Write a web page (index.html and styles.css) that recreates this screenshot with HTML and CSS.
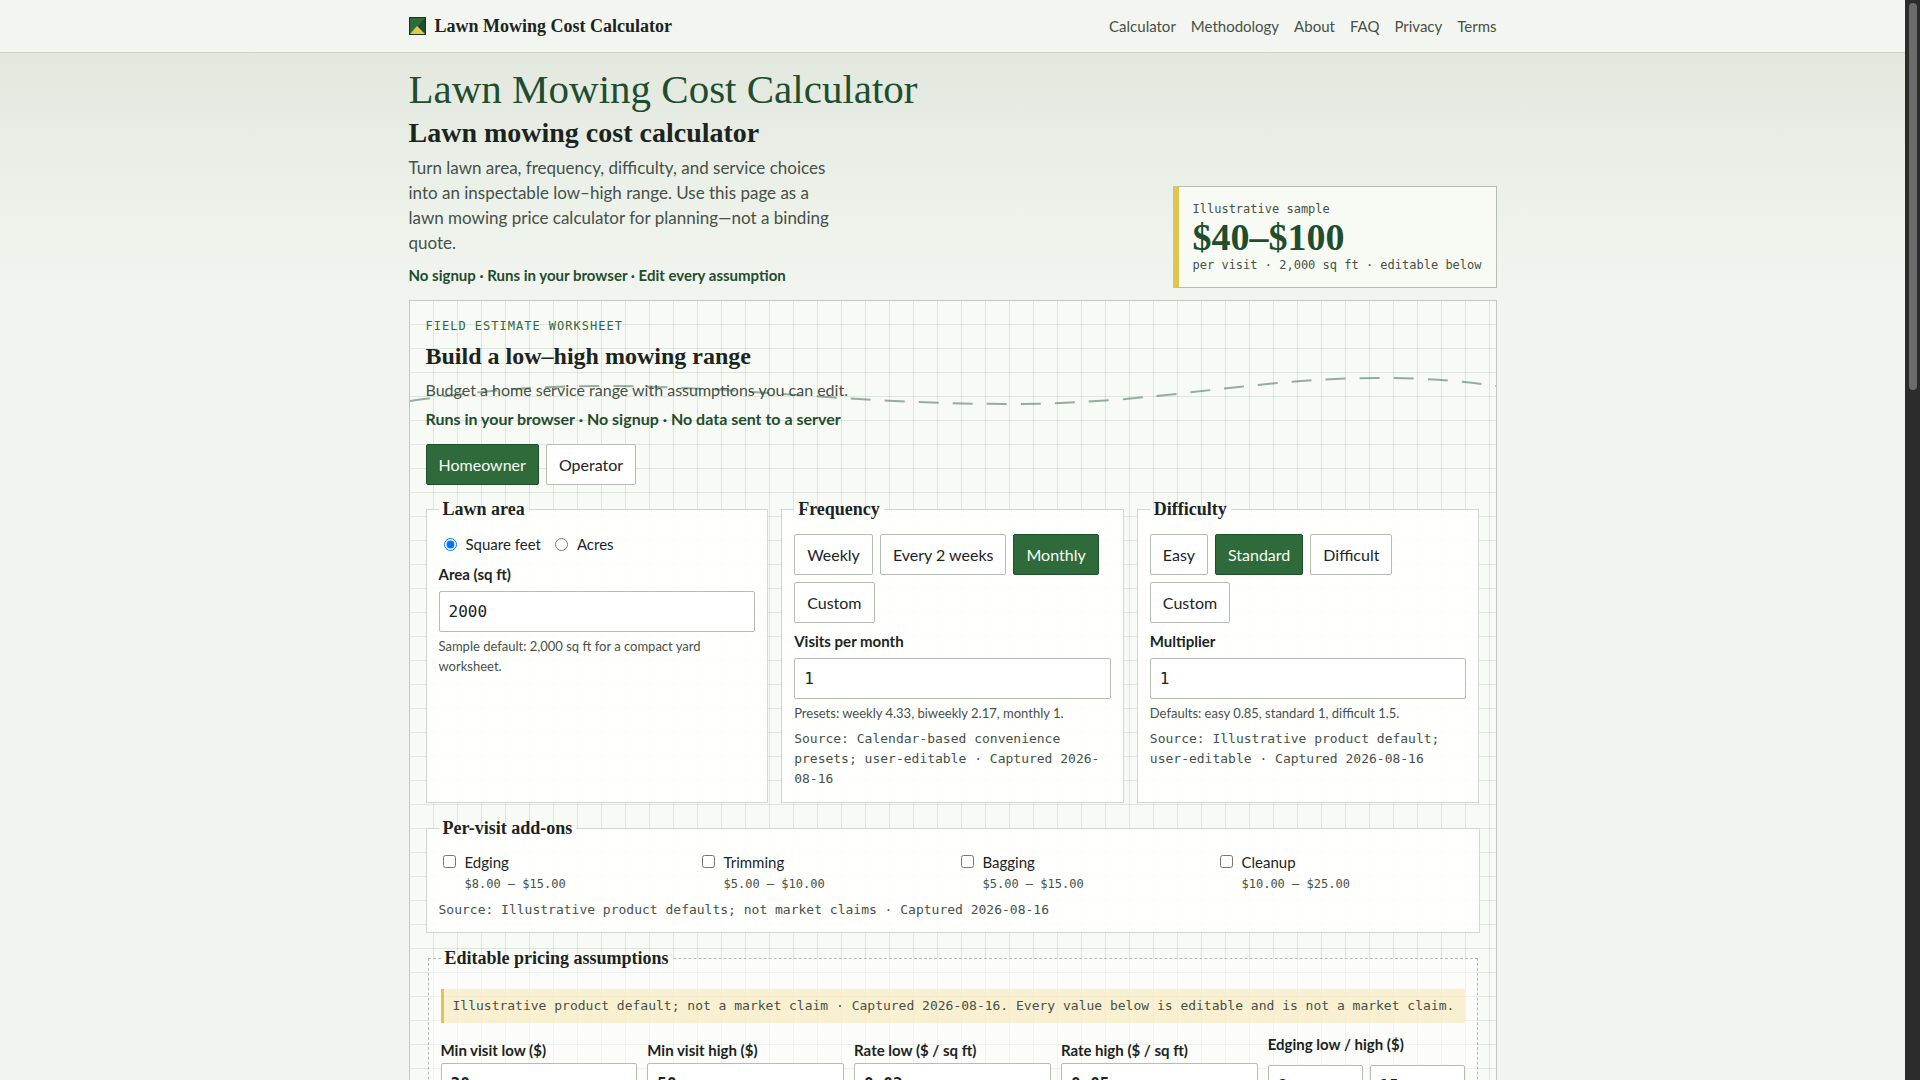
FILE: index.html
```html
<!DOCTYPE html>
<html lang="en">
  <head>
    <meta charset="UTF-8" />
    <meta name="viewport" content="width=device-width, initial-scale=1.0" />
    <title>Lawn Mowing Cost Calculator</title>
    <link rel="stylesheet" href="styles.css" />
  </head>
  <body>
    <div class="page">
      <header class="site-header">
        <div class="wrap header-row">
          <a class="brand" href="#">
            <svg class="brand-mark" viewBox="0 0 17 18" aria-hidden="true">
              <rect width="17" height="18" fill="#2f6b3a" />
              <path d="M17 0V18H0L8 10Z" fill="#1f4d2e" />
              <path d="M8 9L16 17H1Z" fill="#e3c84c" />
              <rect x="0.5" y="0.5" width="16" height="17" fill="none" stroke="#17351f" />
            </svg>
            Lawn Mowing Cost Calculator
          </a>
          <nav class="site-nav">
            <a href="#calculator">Calculator</a>
            <a href="#">Methodology</a>
            <a href="#">About</a>
            <a href="#">FAQ</a>
            <a href="#">Privacy</a>
            <a href="#">Terms</a>
          </nav>
        </div>
      </header>

      <main>
        <!-- Hero -->
        <section class="hero">
          <div class="wrap hero-row">
            <div class="hero-copy">
              <h1>Lawn Mowing Cost Calculator</h1>
              <h2>Lawn mowing cost calculator</h2>
              <p class="lead">
                Turn lawn area, frequency, difficulty, and service choices into
                an inspectable low–high range. Use this page as a lawn mowing
                price calculator for planning—not a binding quote.
              </p>
              <p class="trust">No signup · Runs in your browser · Edit every assumption</p>
            </div>
            <aside class="sample">
              <span>Illustrative sample</span>
              <strong>$40–$100</strong>
              <span>per visit · 2,000 sq ft · editable below</span>
            </aside>
          </div>
        </section>

        <!-- Worksheet -->
        <div class="wrap">
          <form class="worksheet" id="calculator">
            <svg class="mow-line" viewBox="0 0 1086 40" preserveAspectRatio="none" aria-hidden="true">
              <path d="M0 25C60 16 120 10 190 10C330 10 440 28 600 28C750 28 840 2 970 2C1015 2 1055 5 1086 10" />
            </svg>

            <p class="eyebrow">Field estimate worksheet</p>
            <h2 class="worksheet-title">Build a low–high mowing range</h2>
            <p class="intro">Budget a home service range with assumptions you can edit.</p>
            <p class="trust">Runs in your browser · No signup · No data sent to a server</p>

            <div class="choices modes">
              <button type="button" class="choice active">Homeowner</button>
              <button type="button" class="choice">Operator</button>
            </div>

            <div class="inputs">
              <fieldset class="card">
                <legend>Lawn area</legend>
                <div class="units">
                  <label><input type="radio" name="unit" checked /> Square feet</label>
                  <label><input type="radio" name="unit" /> Acres</label>
                </div>
                <label class="field-label" for="area">Area (sq ft)</label>
                <input class="field" type="text" id="area" value="2000" />
                <p class="hint">Sample default: 2,000 sq ft for a compact yard worksheet.</p>
              </fieldset>

              <fieldset class="card">
                <legend>Frequency</legend>
                <div class="choices">
                  <button type="button" class="choice">Weekly</button>
                  <button type="button" class="choice">Every 2 weeks</button>
                  <button type="button" class="choice active">Monthly</button>
                  <button type="button" class="choice">Custom</button>
                </div>
                <label class="field-label" for="visits">Visits per month</label>
                <input class="field" type="text" id="visits" value="1" />
                <p class="hint">Presets: weekly 4.33, biweekly 2.17, monthly 1.</p>
                <p class="source">Source: Calendar-based convenience presets; user-editable · Captured 2026-08-16</p>
              </fieldset>

              <fieldset class="card">
                <legend>Difficulty</legend>
                <div class="choices">
                  <button type="button" class="choice">Easy</button>
                  <button type="button" class="choice active">Standard</button>
                  <button type="button" class="choice">Difficult</button>
                  <button type="button" class="choice">Custom</button>
                </div>
                <label class="field-label" for="multiplier">Multiplier</label>
                <input class="field" type="text" id="multiplier" value="1" />
                <p class="hint">Defaults: easy 0.85, standard 1, difficult 1.5.</p>
                <p class="source">Source: Illustrative product default; user-editable · Captured 2026-08-16</p>
              </fieldset>
            </div>

            <fieldset class="card addons">
              <legend>Per-visit add-ons</legend>
              <div class="addon-list">
                <label class="addon"><input type="checkbox" /><span>Edging<small>$8.00 – $15.00</small></span></label>
                <label class="addon"><input type="checkbox" /><span>Trimming<small>$5.00 – $10.00</small></span></label>
                <label class="addon"><input type="checkbox" /><span>Bagging<small>$5.00 – $15.00</small></span></label>
                <label class="addon"><input type="checkbox" /><span>Cleanup<small>$10.00 – $25.00</small></span></label>
              </div>
              <p class="source">Source: Illustrative product defaults; not market claims · Captured 2026-08-16</p>
            </fieldset>

            <fieldset class="assumptions">
              <legend>Editable pricing assumptions</legend>
              <p class="note">Illustrative product default; not a market claim · Captured 2026-08-16. Every value below is editable and is not a market claim.</p>
              <div class="prices">
                <div class="price">
                  <label class="field-label" for="min-low">Min visit low ($)</label>
                  <input class="field" type="text" id="min-low" value="30" />
                </div>
                <div class="price">
                  <label class="field-label" for="min-high">Min visit high ($)</label>
                  <input class="field" type="text" id="min-high" value="50" />
                </div>
                <div class="price">
                  <label class="field-label" for="rate-low">Rate low ($ / sq ft)</label>
                  <input class="field" type="text" id="rate-low" value="0.02" />
                </div>
                <div class="price">
                  <label class="field-label" for="rate-high">Rate high ($ / sq ft)</label>
                  <input class="field" type="text" id="rate-high" value="0.05" />
                </div>
                <div class="price price-pair">
                  <label class="field-label" for="edging-low">Edging low / high ($)</label>
                  <div class="pair">
                    <input class="field" type="text" id="edging-low" value="8" />
                    <input class="field" type="text" aria-label="Edging high" value="15" />
                  </div>
                </div>
              </div>
            </fieldset>
          </form>
        </div>
      </main>
    </div>

    <div class="scrollbar" aria-hidden="true"><div class="thumb"></div></div>
  </body>
</html>
```
FILE: styles.css
```css
:root {
  --ink: #1c241e;
  --muted: #465048;
  --green: #2f6b3a;
  --dark-green: #1f4d2e;
  --yellow: #e0c651;
  --line: #b4bcb4;
  --paper: #f2f5ef;
  --sans: Lato, "Noto Sans", sans-serif;
  --serif: "Liberation Serif", serif;
  --mono: "DejaVu Sans Mono", monospace;
}

* {
  box-sizing: border-box;
}

body {
  margin: 0;
  display: flex;
  height: 100vh;
  overflow: hidden;
  background: var(--paper);
  color: var(--ink);
  font-family: var(--sans);
  font-size: 16px;
  line-height: 25px;
}

h1,
h2,
p {
  margin: 0;
}

.page {
  flex: 1;
  min-width: 0;
  overflow: hidden;
}

.wrap {
  width: 100%;
  max-width: 1120px;
  margin: 0 auto;
  padding: 0 16px;
}

/* Header */
.site-header {
  background: #f3f6f0;
  border-bottom: 1px solid #cfd6cd;
}

.header-row {
  display: flex;
  justify-content: space-between;
  align-items: center;
  height: 52px;
}

.brand {
  display: flex;
  align-items: center;
  gap: 9px;
  color: var(--ink);
  font-family: var(--serif);
  font-size: 18px;
  font-weight: 700;
  text-decoration: none;
}

.brand-mark {
  width: 17px;
  height: 18px;
}

.site-nav {
  display: flex;
  gap: 15px;
}

.site-nav a {
  color: var(--muted);
  font-size: 15px;
  text-decoration: none;
}

/* Hero */
.hero {
  background: linear-gradient(#e2e8de, #eaf0e8 50%, var(--paper));
  padding: 12px 0;
}

.hero-row {
  display: flex;
  justify-content: space-between;
  align-items: flex-end;
}

.hero h1 {
  color: var(--dark-green);
  font-family: var(--serif);
  font-size: 41px;
  font-weight: 400;
  line-height: 48px;
}

.hero h2 {
  font-family: var(--serif);
  font-size: 28px;
  line-height: 40px;
  margin-bottom: 2px;
}

.lead {
  max-width: 432px;
  color: var(--muted);
  font-size: 17px;
}

.trust {
  color: var(--dark-green);
  font-size: 15px;
  font-weight: 700;
}

.hero .trust {
  margin-top: 8px;
}

.sample {
  display: flex;
  flex-direction: column;
  padding: 12px 14px;
  background: #f7fbf4;
  border: 1px solid var(--line);
  border-left: 6px solid var(--yellow);
  color: var(--muted);
  font-family: var(--mono);
  font-size: 12px;
  line-height: 20px;
}

.sample strong {
  color: var(--dark-green);
  font-family: var(--serif);
  font-size: 38px;
  line-height: 36px;
}

/* Worksheet */
.worksheet {
  position: relative;
  padding: 16px;
  border: 1px solid #c1c8c0;
  background:
    repeating-linear-gradient(90deg, transparent 0 23px, rgba(31, 77, 46, 0.12) 23px 24px),
    repeating-linear-gradient(transparent 0 23px, rgba(31, 77, 46, 0.12) 23px 24px),
    #f8fbf5;
}

.mow-line {
  position: absolute;
  top: 75px;
  left: 0;
  width: 100%;
  height: 40px;
  pointer-events: none;
}

.mow-line path {
  fill: none;
  stroke: var(--dark-green);
  stroke-width: 2;
  stroke-dasharray: 20 14;
  opacity: 0.45;
}

.eyebrow {
  color: var(--green);
  font-family: var(--mono);
  font-size: 12px;
  line-height: 18px;
  letter-spacing: 1px;
  text-transform: uppercase;
}

.worksheet-title {
  margin-top: 4px;
  font-family: var(--serif);
  font-size: 24px;
  line-height: 34px;
}

.intro {
  margin-top: 4px;
  color: var(--muted);
}

.worksheet .trust {
  margin-top: 4px;
  font-size: 16px;
}

.choices {
  display: flex;
  flex-wrap: wrap;
  gap: 7px;
}

.modes {
  margin-top: 13px;
}

.choice {
  height: 41px;
  padding: 0 12px;
  border: 1px solid var(--line);
  border-radius: 2px;
  background: #fff;
  color: var(--ink);
  font-family: var(--sans);
  font-size: 16px;
}

.choice.active {
  background: var(--green);
  border-color: var(--dark-green);
  color: #f7fbf4;
}

.inputs {
  display: grid;
  grid-template-columns: repeat(3, 1fr);
  gap: 13px;
  margin-top: 12px;
}

fieldset {
  min-width: 0;
  margin: 0;
}

legend {
  padding: 0 4px;
  font-family: var(--serif);
  font-size: 18px;
  font-weight: 700;
  line-height: 25px;
}

.card {
  padding: 12px 12px 13px;
  border: 1px solid #d2d8d1;
  background: rgba(255, 255, 255, 0.88);
}

.units {
  display: flex;
  gap: 9px;
  margin-bottom: 8px;
  font-size: 15px;
  line-height: 20px;
}

.units label {
  display: flex;
  align-items: center;
  gap: 9px;
}

.units input {
  margin: 0 0 0 5px;
}

.field-label {
  display: block;
  font-size: 15px;
  font-weight: 700;
}

.card .field-label {
  margin: 6px 0 4px;
}

.field {
  display: block;
  width: 100%;
  height: 41px;
  padding: 0 9px;
  border: 1px solid var(--line);
  border-radius: 2px;
  background: #fff;
  color: var(--ink);
  font-family: var(--mono);
  font-size: 16px;
}

.hint {
  margin-top: 4px;
  color: var(--muted);
  font-size: 13px;
  line-height: 20px;
}

.source {
  margin-top: 6px;
  color: var(--muted);
  font-family: var(--mono);
  font-size: 13px;
  line-height: 20px;
}

.addons {
  margin-top: 13px;
  padding: 10px 12px 12px;
}

.addon-list {
  display: grid;
  grid-template-columns: repeat(4, 1fr);
  gap: 8px;
}

.addon {
  display: flex;
  align-items: flex-start;
  gap: 9px;
  font-size: 15px;
  line-height: 23px;
}

.addon input {
  margin: 4px 0 0 4px;
}

.addon small {
  display: block;
  color: var(--muted);
  font-family: var(--mono);
  font-size: 12px;
  line-height: 20px;
}

.assumptions {
  margin: 13px 2px 0;
  padding: 12px;
  border: 1px dashed var(--line);
  background: rgba(255, 255, 255, 0.5);
}

.note {
  margin-top: 6px;
  padding: 7px 9px;
  border-left: 3px solid var(--yellow);
  background: rgba(246, 232, 184, 0.6);
  color: var(--muted);
  font-family: var(--mono);
  font-size: 13px;
  line-height: 20px;
}

.prices {
  display: grid;
  grid-template-columns: repeat(5, 1fr);
  gap: 10px;
  margin-top: 9px;
}

.price {
  padding-top: 6px;
}

.price .field {
  font-weight: 700;
}

.price-pair {
  padding-top: 0;
}

.price-pair .field {
  font-weight: 400;
}

.pair {
  display: flex;
  gap: 7px;
  margin-top: 8px;
}

/* Window scrollbar */
.scrollbar {
  width: 15px;
  padding: 3px 3px 3px 4px;
  background: #2c2c2c;
}

.thumb {
  height: 36%;
  border-radius: 4px;
  background: #6b6b6b;
}
```
